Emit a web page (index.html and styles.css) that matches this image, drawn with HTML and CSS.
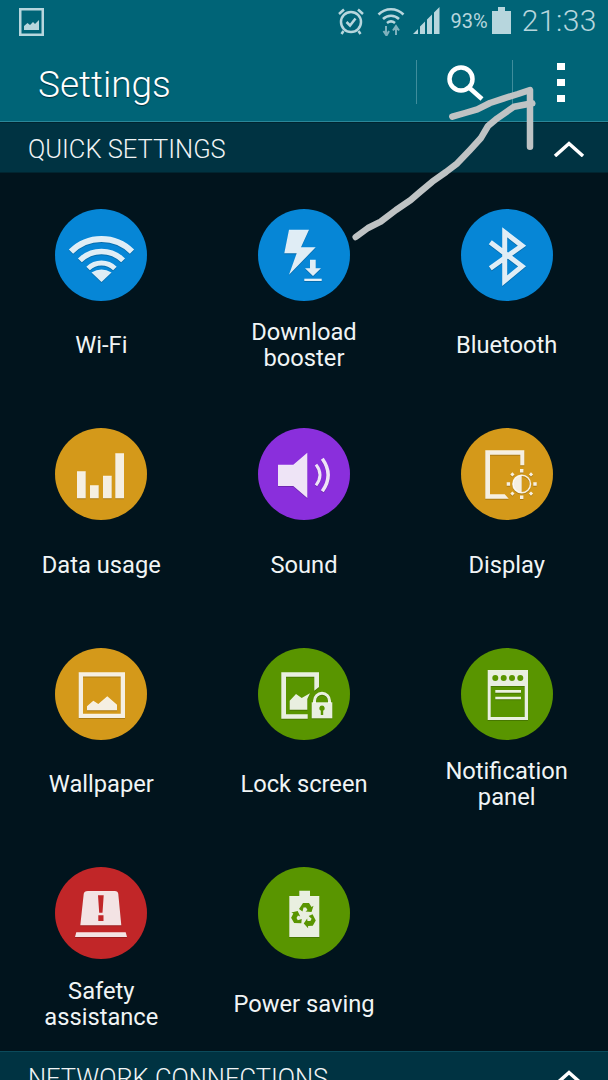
FILE: index.html
```html
<!DOCTYPE html>
<html lang="en">
  <head>
    <meta charset="UTF-8" />
    <meta name="viewport" content="width=device-width, initial-scale=1.0" />
    <title>Settings</title>
    <link rel="stylesheet" href="styles.css">
  </head>
  <body>
    <div class="screen">
      <div class="header">
        <div class="status-bar">
          <svg class="status-pic" width="25" height="28" viewBox="0 0 25 28">
            <path fill-rule="evenodd" d="M0 0H25V28H0ZM2.5 2.5V25.500H22.500V2.500Z" />
            <path d="M5 22V18L8.500 15 11 17 14 14 16 16 20 12V22Z" />
          </svg>
          <div class="status-right">
            <svg class="status-alarm" width="28" height="28" viewBox="0 0 28 28">
              <circle cx="14" cy="15" r="10" />
              <path d="M9.500 15 13 18.500 18.500 11.500" />
              <path d="M2 7 7 2.500M26 7 21 2.500M6.500 24 4.500 27M21.500 24 23.500 27" />
            </svg>
            <svg class="status-wifi" width="28" height="30" viewBox="0 0 28 30">
              <path d="M1.500 8.500C8.500 1.500 19.500 1.500 26.500 8.500" />
              <path d="M6 13C10.500 8.500 17.500 8.500 22 13" />
              <path d="M10 17C12.500 15 15.500 15 18 17" />
              <path class="status-wifi-arrows" d="M9 20V28M6.500 25 9.500 29.500 12 25M19 29V21M16 24.500 19 20 22 24.500" />
            </svg>
            <svg class="status-signal" width="27" height="27" viewBox="0 0 27 27">
              <path d="M0 27 5 22V27ZM7 27V19.500L12 14.500V27ZM14 27V12.500L19 7.500V27ZM21 27V5.500L26.500 0V27Z" />
            </svg>
            <span class="status-pct">93%</span>
            <svg class="status-battery" width="19" height="27" viewBox="0 0 19 27">
              <path d="M6 0H13V4H19V27H0V4H6Z" />
            </svg>
            <span class="status-time">21:33</span>
          </div>
        </div>
        <div class="action-bar">
          <h1 class="action-title">Settings</h1>
          <div class="action-btn">
            <svg width="40" height="40" viewBox="0 0 40 40">
              <circle cx="16" cy="17" r="11.500" />
              <path d="M24 25.500 37 37" />
            </svg>
          </div>
          <div class="action-btn action-more">
            <span class="dot"></span>
            <span class="dot"></span>
            <span class="dot"></span>
          </div>
        </div>
      </div>

      <div class="section-head">
        <span>QUICK SETTINGS</span>
        <svg class="chevron" width="32" height="16" viewBox="0 0 32 16"><path d="M2 15 16 2.500 30 15" /></svg>
      </div>

      <div class="grid">
        <div class="item">
          <div class="circle blue">
            <svg class="icon" viewBox="0 0 92 92">
              <g class="line">
                <path stroke-width="6" d="M16 42.600A43 43 0 0 1 77 42.600" />
                <path stroke-width="5.500" d="M24.900 51.400A30.500 30.500 0 0 1 68.100 51.400" />
                <path stroke-width="5" d="M33.100 59.600A19 19 0 0 1 59.900 59.600" />
              </g>
              <path d="M46.500 73 36.500 63.500Q46.500 57.500 56.500 63.500Z" />
            </svg>
          </div>
          <div class="label">Wi-Fi</div>
        </div>
        <div class="item">
          <div class="circle blue">
            <svg class="icon" viewBox="0 0 92 92">
              <path d="M31 20.700H51L43 38.300H57.700L31 65.700 38.700 44.300H26.300Z" />
              <path d="M52 50.700H57.700V59.300H63L55 67 47 59.300H52Z" />
              <path d="M46.300 69.700H63.700V72H46.300Z" />
            </svg>
          </div>
          <div class="label">Download<br>booster</div>
        </div>
        <div class="item">
          <div class="circle blue">
            <svg class="icon" viewBox="0 0 92 92">
              <path class="line" stroke-width="5" d="M29.300 33.300 61 57.300 43.700 71.700V23.300L61 36.700 29.300 59.300" />
            </svg>
          </div>
          <div class="label">Bluetooth</div>
        </div>

        <div class="item">
          <div class="circle gold">
            <svg class="icon" viewBox="0 0 92 92">
              <path d="M22 43.300H30.700V70.300H22ZM35 57.300H43.700V70.300H35ZM48 47.700H56.700V70.300H48ZM60.300 25.300H69V70.300H60.300Z" />
            </svg>
          </div>
          <div class="label">Data usage</div>
        </div>
        <div class="item">
          <div class="circle purple">
            <svg class="icon" viewBox="0 0 92 92">
              <path d="M20 36.700H35.300L49.300 24.700V70L35.300 58H20Z" />
              <g class="line">
                <path stroke-width="3" d="M58 36.700Q66 47 58 57.300" />
                <path stroke-width="3.500" d="M64.300 30.700Q76 47 64.300 63.300" />
              </g>
            </svg>
          </div>
          <div class="label">Sound</div>
        </div>
        <div class="item">
          <div class="circle gold">
            <svg class="icon" viewBox="0 0 92 92">
              <path d="M24.300 22.300H63.300V37.300H59.300V26.700H29V66.300H43.700L47.700 70.700H24.300Z" />
              <circle class="line" stroke-width="1.500" cx="60.700" cy="56" r="8.800" />
              <path d="M60.700 47.200A8.800 8.800 0 0 0 60.700 64.800Z" />
              <path d="M59 41H62.400V44.400H59ZM59 67.600H62.400V71H59ZM45.700 54.300H49.100V57.700H45.700ZM72.300 54.300H75.700V57.700H72.300ZM51.400 44.300 53.500 46.400 51.400 48.500 49.300 46.400ZM70 44.300 72.100 46.400 70 48.500 67.900 46.400ZM51.400 63.500 53.500 65.600 51.400 67.700 49.300 65.600ZM70 63.500 72.100 65.600 70 67.700 67.900 65.600Z" />
            </svg>
          </div>
          <div class="label">Display</div>
        </div>

        <div class="item">
          <div class="circle gold">
            <svg class="icon" viewBox="0 0 92 92">
              <path fill-rule="evenodd" d="M23.700 24.300H70V70H23.700ZM28 28.600V65.700H65.700V28.600Z" />
              <path d="M32 62.300V58.300L38.300 52.700 43.300 56 52.300 48.300 62 56.700V62.300Z" />
            </svg>
          </div>
          <div class="label">Wallpaper</div>
        </div>
        <div class="item">
          <div class="circle green">
            <svg class="icon" viewBox="0 0 92 92">
              <path d="M23.300 24.300H61V39L56.300 42.700V28.700H28V66.300H49.700V70.700H23.300Z" />
              <path d="M31.700 61.700V52.700L38 46 43.700 50 52 45.300 49.300 51V61.700Z" />
              <path class="line" stroke-width="3" d="M56.500 55V52.800A7.500 7.500 0 0 1 71.500 52.800V55" />
              <path d="M53.700 54.300H74.300V70.300H53.700Z" />
              <path class="hole-green" d="M64 57.500A2.800 2.800 0 0 1 65.200 62.800V67H62.800V62.800A2.800 2.800 0 0 1 64 57.500Z" />
            </svg>
          </div>
          <div class="label">Lock screen</div>
        </div>
        <div class="item">
          <div class="circle green">
            <svg class="icon" viewBox="0 0 92 92">
              <path fill-rule="evenodd" d="M26.700 22H67V72H26.700ZM29.700 38V69H63.700V38Z" />
              <path class="hole-green" d="M34.300 27A3 3 0 1 0 34.300 33 3 3 0 1 0 34.300 27ZM42.700 27A3 3 0 1 0 42.700 33 3 3 0 1 0 42.700 27ZM51 27A3 3 0 1 0 51 33 3 3 0 1 0 51 27ZM59.300 27A3 3 0 1 0 59.300 33 3 3 0 1 0 59.300 27Z" />
              <path d="M34.300 42H60V44.700H34.300ZM34.300 48.700H60V51.300H34.300Z" />
            </svg>
          </div>
          <div class="label">Notification<br>panel</div>
        </div>

        <div class="item">
          <div class="circle red">
            <svg class="icon" viewBox="0 0 92 92">
              <path d="M25.300 58.300 28.700 27Q29 24 33 24H59.700Q63 24 63.300 27L66.300 58.300Z" />
              <path class="hole-red" d="M43 28.300H48.700L47.500 45.700H44.200ZM43.300 48.300H48.500V54H43.300Z" />
              <path d="M20 70 21.300 65.300H70.700L72 70Z" />
            </svg>
          </div>
          <div class="label">Safety<br>assistance</div>
        </div>
        <div class="item">
          <div class="circle green">
            <svg class="icon" viewBox="0 0 92 92">
              <path d="M41.300 23.700H52V29H61.300V70H31.300V29H41.300Z" />
              <g class="hole-green">
                <path id="recycle" d="M41 42 45 36H51L53.500 40 55.500 38.800 53.500 45 47.500 44.500 49.500 43 48 40.500H45.500L44.500 44.500Z" />
                <use href="#recycle" transform="rotate(120 46.300 48.500)" />
                <use href="#recycle" transform="rotate(240 46.300 48.500)" />
              </g>
            </svg>
          </div>
          <div class="label">Power saving</div>
        </div>
      </div>

      <div class="section-head section-next">
        <span>NETWORK CONNECTIONS</span>
        <svg class="chevron" width="32" height="16" viewBox="0 0 32 16"><path d="M2 15 16 2.500 30 15" /></svg>
      </div>

      <!-- arrow someone drew on top of the screenshot -->
      <svg class="scribble" width="608" height="250" viewBox="0 0 608 250">
        <path d="M355.700 237 368 228 380.700 221.700 396 210 410.700 200 420 192 432.300 181.700 446 172 457.300 163.300 470 150 480.700 138.300 488 126 497.300 118.300 514 106.700 532.300 103.300" />
        <path d="M452.300 116.700 465 113 477.300 109.300 490 103 504 98.300 518 94 530 90V146.700" />
      </svg>
    </div>
  </body>
</html>
```

FILE: styles.css
```css
* {
  box-sizing: border-box;
}
body {
  margin: 0;
  background: #01141d;
  font-family: Roboto, "Noto Sans", sans-serif;
}
.screen {
  position: relative;
  width: 608px;
  height: 1080px;
  overflow: hidden;
  background: #01141d;
  color: #f0f4f5;
}

/* top bars */
.header {
  background: #006477;
  border-bottom: 1px solid #2b8799;
  height: 122px;
}
.status-bar {
  display: flex;
  justify-content: space-between;
  align-items: center;
  height: 41px;
  padding: 0 11px 0 19px;
  color: #b7d6dd;
}
.status-pic {
  fill: #b7d6dd;
  margin-top: 3px;
}
.status-right {
  display: flex;
  align-items: center;
}
.status-alarm,
.status-wifi {
  fill: none;
  stroke: #b7d6dd;
  stroke-width: 2.500;
}
.status-wifi {
  margin-left: 12px;
}
.status-wifi-arrows {
  stroke: #7fb1bd;
  stroke-width: 2;
}
.status-signal {
  fill: #b7d6dd;
  margin-left: 8px;
}
.status-pct {
  font-size: 20px;
  margin-left: 10px;
}
.status-battery {
  fill: #b7d6dd;
  margin-left: 4px;
}
.status-time {
  font-size: 30px;
  font-weight: 300;
  letter-spacing: 0.5px;
  margin-left: 11px;
}
.action-bar {
  display: flex;
  align-items: center;
  height: 44px;
  margin-top: 19px;
}
.action-title {
  flex: 1;
  margin: 0;
  padding: 4px 0 0 38px;
  font-size: 37px;
  font-weight: 300;
  color: #fff;
  text-shadow: 0 1px 1px #00303b;
}
.action-btn {
  display: flex;
  align-items: center;
  justify-content: center;
  width: 96px;
  height: 44px;
  border-left: 1px solid #3f8d9c;
}
.action-btn svg {
  fill: none;
  stroke: #fff;
  stroke-width: 4.500;
}
.action-more {
  flex-direction: column;
  gap: 9px;
}
.dot {
  width: 8px;
  height: 7px;
  background: #fff;
}

/* section header */
.section-head {
  display: flex;
  justify-content: space-between;
  height: 51px;
  padding: 10px 23px 0 28px;
  background: #003342;
  border-top: 1px solid #012530;
  border-bottom: 1px solid #012530;
  font-size: 25.500px;
  line-height: 32px;
  font-weight: 300;
}
.chevron {
  margin-top: 8px;
  fill: none;
  stroke: #fff;
  stroke-width: 3.500;
}
.section-next {
  border-top-color: #0b4a5b;
}

/* icon grid */
.grid {
  display: grid;
  grid-template-columns: repeat(3, 1fr);
  align-content: start;
  row-gap: 57px;
  height: 878px;
  padding-top: 35.500px;
}
.item {
  display: flex;
  flex-direction: column;
  align-items: center;
}
.circle {
  width: 92px;
  height: 92px;
  border-radius: 50%;
}
.blue {
  background: #0686d6;
}
.gold {
  background: #d4991a;
}
.purple {
  background: #8a2fdc;
}
.green {
  background: #599500;
}
.red {
  background: #c12628;
}
.icon {
  display: block;
  width: 92px;
  height: 92px;
  fill: rgba(255, 255, 255, 0.88);
  filter: drop-shadow(0 1px 0 rgba(0, 0, 0, 0.22));
}
.line {
  fill: none;
  stroke: rgba(255, 255, 255, 0.88);
}
.hole-green {
  fill: #599500;
}
.hole-red {
  fill: #c12628;
}
.label {
  display: flex;
  align-items: center;
  justify-content: center;
  height: 52px;
  margin-top: 18.500px;
  font-size: 23.700px;
  line-height: 26px;
  text-align: center;
}

/* hand-drawn arrow */
.scribble {
  position: absolute;
  top: 0;
  left: 0;
  fill: none;
  stroke: #bfc3c4;
  stroke-width: 6.500;
  stroke-linecap: round;
  stroke-linejoin: round;
}
```
